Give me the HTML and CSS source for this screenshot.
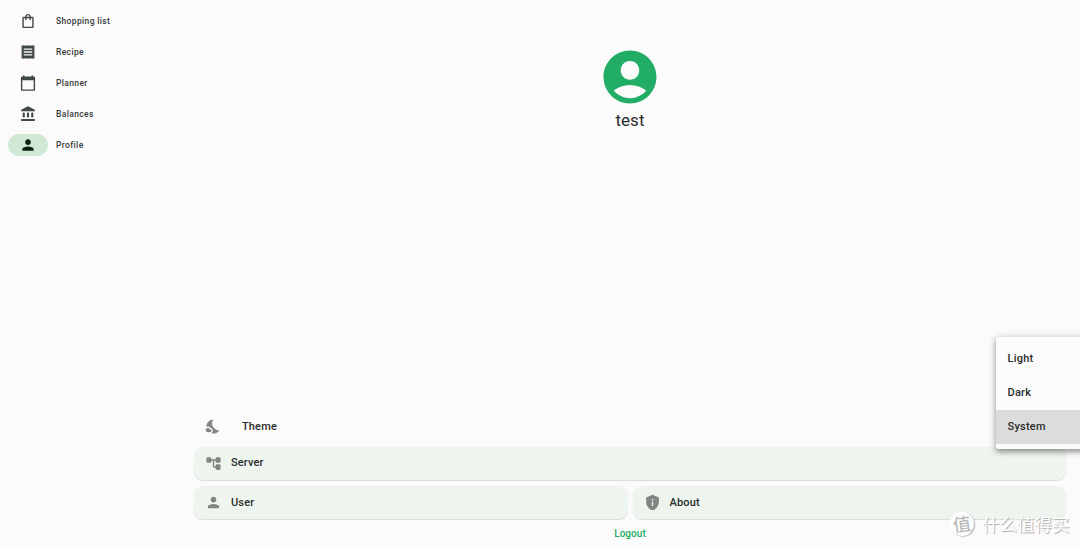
FILE: index.html
```
<!DOCTYPE html>
<html lang="en">
    <head>
        <meta charset="utf-8">
        <title>Profile</title>
        <link rel="stylesheet" href="styles.css">
    </head>

    <body>
        <nav class="sidebar">
            <a class="nav-item">
                <span class="nav-icon"><svg viewBox="-0.7 -0.7 25.4 25.4"><path d="M18 6h-2c0-2.21-1.79-4-4-4S8 3.79 8 6H6c-1.1 0-2 .9-2 2v12c0 1.1.9 2 2 2h12c1.1 0 2-.9 2-2V8c0-1.1-.9-2-2-2zm-6-2c1.1 0 2 .9 2 2h-4c0-1.1.9-2 2-2zm6 16H6V8h2v2c0 .55.45 1 1 1s1-.45 1-1V8h4v2c0 .55.45 1 1 1s1-.45 1-1V8h2v12z"/></svg></span>
                Shopping list
            </a>
            <a class="nav-item">
                <span class="nav-icon"><svg viewBox="-0.7 -0.7 25.4 25.4"><path d="M18 17H6v-2h12v2zm0-4H6v-2h12v2zm0-4H6V7h12v2zM3 22l1.5-1.5L6 22l1.5-1.5L9 22l1.5-1.5L12 22l1.5-1.5L15 22l1.5-1.5L18 22l1.5-1.5L21 22V2l-1.5 1.5L18 2l-1.5 1.5L15 2l-1.5 1.5L12 2l-1.5 1.5L9 2 7.5 3.5 6 2 4.5 3.5 3 2v20z"/></svg></span>
                Recipe
            </a>
            <a class="nav-item">
                <span class="nav-icon"><svg viewBox="-0.7 -0.7 25.4 25.4"><path d="M20 3h-1V2c0-.55-.45-1-1-1s-1 .45-1 1v1H7V2c0-.55-.45-1-1-1s-1 .45-1 1v1H4c-1.1 0-2 .9-2 2v16c0 1.1.9 2 2 2h16c1.1 0 2-.9 2-2V5c0-1.1-.9-2-2-2zm-1 18H5c-.55 0-1-.45-1-1V8h16v12c0 .55-.45 1-1 1z"/></svg></span>
                Planner
            </a>
            <a class="nav-item">
                <span class="nav-icon"><svg viewBox="-0.7 -0.7 25.4 25.4"><path d="M4.5 11.5v4c0 .83.67 1.5 1.5 1.5s1.5-.67 1.5-1.5v-4c0-.83-.67-1.5-1.5-1.5s-1.5.67-1.5 1.5zm6 0v4c0 .83.67 1.5 1.5 1.5s1.5-.67 1.5-1.5v-4c0-.83-.67-1.5-1.5-1.5s-1.5.67-1.5 1.5zM3.5 22h17c.83 0 1.5-.67 1.5-1.5s-.67-1.5-1.5-1.5h-17c-.83 0-1.5.67-1.5 1.5S2.67 22 3.5 22zm13-10.5v4c0 .83.67 1.5 1.5 1.5s1.5-.67 1.5-1.5v-4c0-.83-.67-1.5-1.5-1.5s-1.5.67-1.5 1.5zM11.07 1.49L2.67 5.91C2.26 6.12 2 6.55 2 7.02 2 7.56 2.44 8 2.98 8h18.05c.53 0 .97-.44.97-.98 0-.47-.26-.9-.67-1.11l-8.4-4.42c-.58-.31-1.28-.31-1.86 0z"/></svg></span>
                Balances
            </a>
            <a class="nav-item active">
                <span class="nav-icon"><svg viewBox="-0.7 -0.7 25.4 25.4"><path d="M12 12c2.21 0 4-1.79 4-4s-1.79-4-4-4-4 1.79-4 4 1.79 4 4 4zm0 2c-2.67 0-8 1.34-8 4v2h16v-2c0-2.66-5.33-4-8-4z"/></svg></span>
                Profile
            </a>
        </nav>

        <main class="content">
            <div class="account">
                <svg class="avatar" viewBox="1.8 1.8 20.4 20.4"><path d="M12 2C6.48 2 2 6.48 2 12s4.48 10 10 10 10-4.48 10-10S17.52 2 12 2zm0 4c1.93 0 3.5 1.57 3.5 3.5S13.93 13 12 13s-3.5-1.57-3.5-3.5S10.07 6 12 6zm0 14c-2.03 0-4.43-.82-6.14-2.88C7.55 15.8 9.68 15 12 15s4.45.8 6.14 2.12C16.43 19.18 14.03 20 12 20z"/></svg>
                <h1 class="username">test</h1>
            </div>

            <div class="settings">
                <div class="theme">
                    <svg class="icon" viewBox="0 0 24 24"><path d="M11.1 12.08c-2.33-4.51-.5-8.48.53-10.07C6.27 2.2 1.98 6.59 1.98 12c0 .14.02.28.02.42.62-.27 1.29-.42 2-.42 1.66 0 3.18.83 4.1 2.15 1.67.48 2.9 2.02 2.9 3.85 0 1.52-.87 2.83-2.12 3.51.98.32 2.03.5 3.11.5 3.5 0 6.58-1.8 8.37-4.52-2.36.23-6.98-.97-9.26-5.41z"/><path d="M7 16h-.18C6.4 14.84 5.3 14 4 14c-1.66 0-3 1.34-3 3s1.34 3 3 3h3c1.1 0 2-.9 2-2s-.9-2-2-2z"/></svg>
                    Theme
                </div>
                <div class="card server">
                    <svg class="icon" viewBox="0 0 24 24"><path d="M22 9V5c0-1.1-.9-2-2-2h-3c-1.1 0-2 .9-2 2v1H9V5c0-1.1-.9-2-2-2H4c-1.1 0-2 .9-2 2v4c0 1.1.9 2 2 2h3c1.1 0 2-.9 2-2V8h2v7.500c0 1.380 1.120 2.500 2.500 2.500H15v1c0 1.1.9 2 2 2h3c1.1 0 2-.9 2-2v-4c0-1.1-.9-2-2-2h-3c-1.1 0-2 .9-2 2v1h-1.500c-.28 0-.5-.22-.5-.5V8h2v1c0 1.1.9 2 2 2h3c1.1 0 2-.9 2-2z"/></svg>
                    <span class="label">Server</span>
                </div>
                <div class="card-row">
                    <div class="card">
                        <svg class="icon" viewBox="0 0 24 24"><path d="M12 12c2.21 0 4-1.79 4-4s-1.79-4-4-4-4 1.79-4 4 1.79 4 4 4zm0 2c-2.67 0-8 1.34-8 4v2h16v-2c0-2.66-5.33-4-8-4z"/></svg>
                        User
                    </div>
                    <div class="card">
                        <svg class="icon" viewBox="0 0 24 24"><path d="M12 1L3 5v6c0 5.55 3.84 10.74 9 12 5.16-1.26 9-6.45 9-12V5l-9-4zm-1 6h2v2h-2V7zm0 4h2v6h-2v-6z"/></svg>
                        About
                    </div>
                </div>
                <a class="logout">Logout</a>
            </div>
        </main>

        <!-- theme dropdown -->
        <div class="menu">
            <div class="menu-item">Light</div>
            <div class="menu-item">Dark</div>
            <div class="menu-item selected">System</div>
        </div>

        <div class="watermark">
            <span class="badge">值</span>
            <span>什么值得买</span>
        </div>
    </body>
</html>
```

FILE: styles.css
```
* {
    box-sizing: border-box;
}

body {
    margin: 0;
    height: 547px;
    display: flex;
    position: relative;
    overflow: hidden;
    background-color: #fbfbfb;
    color: #2a2c2b;
    font-family: Roboto, sans-serif;
    font-size: 11px;
    font-weight: 500;
    letter-spacing: 0.15px;
}

svg {
    display: block;
    flex: none;
    fill: currentColor;
}

.sidebar {
    width: 180px;
    padding: 10px 8px;
    display: flex;
    flex-direction: column;
    gap: 9px;
}

.nav-item {
    height: 22px;
    display: flex;
    align-items: center;
    gap: 8px;
    font-size: 8.5px;
    letter-spacing: 0.36px;
    color: #383a39;
}

.nav-icon {
    width: 40px;
    height: 22px;
    display: flex;
    align-items: center;
    justify-content: center;
    border-radius: 11px;
    color: #404943;
}

.nav-icon svg {
    width: 18px;
    height: 18px;
}

.active .nav-icon {
    background-color: #d1e8d5;
    color: #0c1f13;
}

.content {
    flex: 1;
    padding: 50px 14px 0;
    display: flex;
    flex-direction: column;
    justify-content: space-between;
}

.account {
    display: flex;
    flex-direction: column;
    align-items: center;
}

.avatar {
    width: 54px;
    height: 54px;
    color: #22ad66;
}

.username {
    margin: 5px 0 0;
    font-size: 17px;
    line-height: 22px;
    font-weight: 400;
    letter-spacing: 0;
}

.settings {
    height: 138px;
    display: flex;
    flex-direction: column;
}

.icon {
    width: 17px;
    height: 17px;
    color: #808782;
}

.theme {
    height: 34px;
    margin-bottom: 4px;
    padding-left: 11px;
    display: flex;
    align-items: center;
    gap: 20px;
}

.theme .icon {
    color: #858585;
}

.card {
    flex: 1;
    height: 33px;
    padding: 0 11px;
    display: flex;
    align-items: center;
    gap: 9px;
    border-radius: 9px;
    background-color: #edf5ee;
    box-shadow: 0 1px 1px rgba(0, 0, 0, 0.13);
}

.server {
    flex: none;
}

.label {
    padding-bottom: 2px;
}

.card-row {
    display: flex;
    gap: 5px;
    margin-top: 6px;
}

.logout {
    margin: 8px auto 0;
    font-size: 10px;
    line-height: 13px;
    letter-spacing: 0.05px;
    color: #22ad66;
}

.menu {
    position: absolute;
    left: 996px;
    top: 337px;
    width: 96px;
    height: 112px;
    padding: 5px 0;
    background-color: #fbfbfb;
    border-radius: 2px;
    box-shadow: 0 3px 5px rgba(0, 0, 0, 0.3), 0 1px 10px rgba(0, 0, 0, 0.2);
}

.menu-item {
    height: 34px;
    padding-left: 11.5px;
    line-height: 34px;
    letter-spacing: 0.25px;
}

.selected {
    background-color: #dcdcdc;
}

.watermark {
    position: absolute;
    left: 950px;
    top: 511px;
    display: flex;
    align-items: center;
    gap: 8px;
    font-family: "Noto Sans CJK SC", sans-serif;
    font-size: 17.5px;
    line-height: 26px;
    font-weight: 400;
    letter-spacing: 0;
    color: #fff;
    text-shadow: 1px 1px 1px #aaa;
}

.badge {
    width: 24px;
    height: 24px;
    border-radius: 50%;
    background-color: #fff;
    box-shadow: 1px 1px 1px #bbb;
    color: #bbb;
    font-size: 18px;
    font-weight: 500;
    line-height: 23px;
    text-align: center;
    text-shadow: none;
    transform: rotate(-8deg);
}
```
